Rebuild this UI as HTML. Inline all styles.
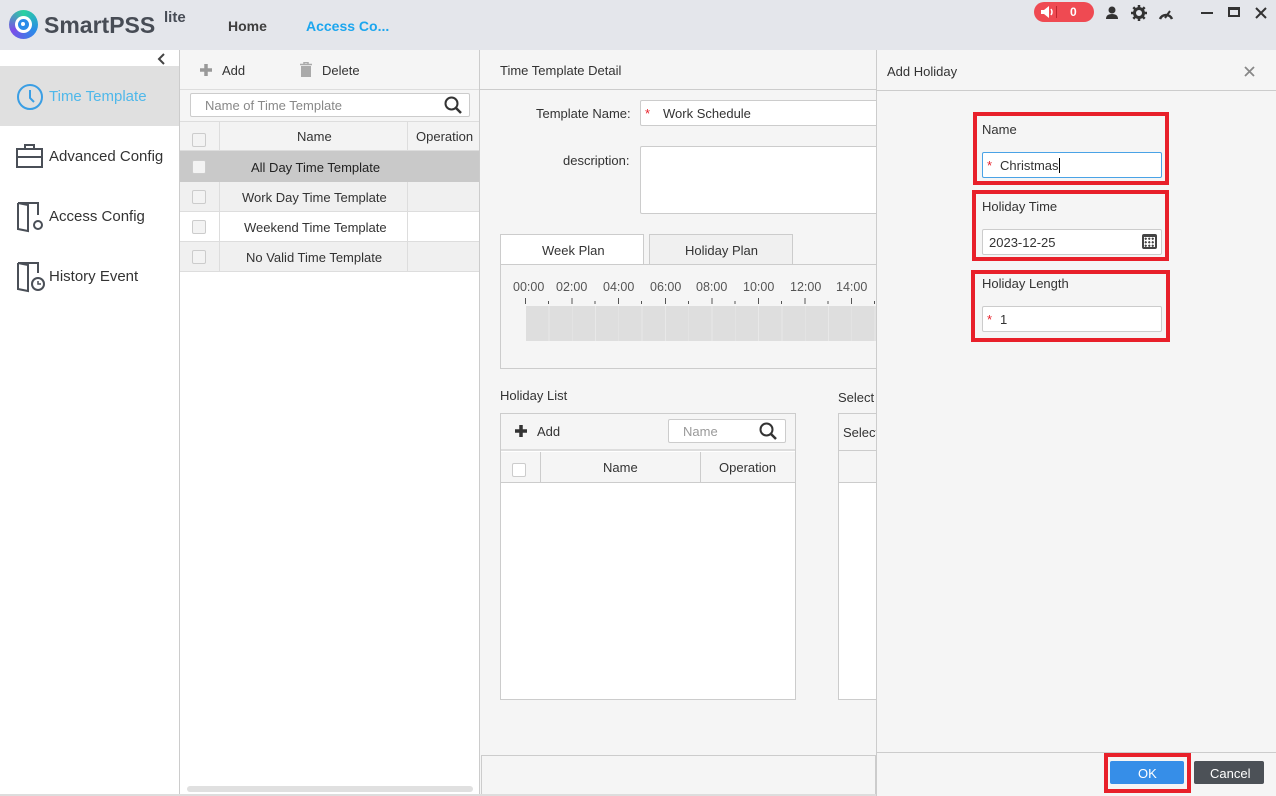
<!DOCTYPE html>
<html><head><meta charset="utf-8"><style>
*{box-sizing:border-box;margin:0;padding:0}
body{width:1276px;height:796px;position:relative;overflow:hidden;font-family:"Liberation Sans",sans-serif;font-size:13px;color:#333;background:#f5f5f5}
.a{position:absolute}
.t{position:absolute;white-space:nowrap}
.inp{position:absolute;background:#fff;border:1px solid #ccc;border-radius:2px}
.red{position:absolute;border:4px solid #e8202a}
.cb{position:absolute;width:14px;height:14px;border:1px solid #ccc;border-radius:2px;background:#f3f3f3}
.star{color:#e8202a}
</style></head><body>
<!-- header -->
<div class="a" style="left:0;top:0;width:1276px;height:50px;background:#e4e6eb"></div>
<div class="a" style="left:9px;top:10px;width:29px;height:29px;border-radius:50%;background:conic-gradient(#2ad2a0,#2a8be8,#7b4ee8,#2ad2a0)"></div>
<div class="a" style="left:15px;top:16px;width:17px;height:17px;border-radius:50%;background:#fff"></div>
<div class="a" style="left:18px;top:19px;width:11px;height:11px;border-radius:50%;background:#2a8be8"></div>
<div class="a" style="left:21px;top:22px;width:4px;height:4px;border-radius:50%;background:#fff"></div>
<div class="t" style="left:44px;top:12px;font-size:23px;font-weight:bold;color:#474c55">SmartPSS</div>
<div class="t" style="left:164px;top:9px;font-size:15px;font-weight:bold;color:#474c55">lite</div>
<div class="t" style="left:228px;top:18px;font-size:14px;font-weight:bold;color:#3e3e3e">Home</div>
<div class="t" style="left:306px;top:18px;font-size:14px;font-weight:bold;color:#1ca6ee">Access Co...</div>
<div class="a" style="left:1034px;top:2px;width:60px;height:20px;border-radius:10px;background:#ef4a52"></div>
<svg class="a" style="left:1040px;top:5px" width="14" height="14"><path d="M1 5h3l5-4v12l-5-4H1z" fill="#fff"/><path d="M11 4q2 3 0 6" stroke="#fff" stroke-width="1.5" fill="none"/></svg>
<div class="a" style="left:1056px;top:6px;width:1px;height:12px;background:#c0262e"></div>
<div class="t" style="left:1070px;top:5px;font-size:12px;font-weight:bold;color:#fff">0</div>
<svg class="a" style="left:1105px;top:6px" width="14" height="14"><circle cx="7" cy="4" r="3.5" fill="#333"/><path d="M1 13q0-5 6-5t6 5z" fill="#333"/></svg>
<svg class="a" style="left:1131px;top:5px" width="16" height="16"><circle cx="8" cy="8" r="4.5" fill="none" stroke="#333" stroke-width="3"/><path d="M8 0v4M8 12v4M0 8h4M12 8h4M2.3 2.3l3 3M10.7 10.7l3 3M2.3 13.7l3-3M10.7 5.3l3-3" stroke="#333" stroke-width="2.5"/></svg>
<svg class="a" style="left:1158px;top:6px" width="16" height="14"><path d="M2 13a6.5 6.5 0 0 1 12 0" fill="none" stroke="#333" stroke-width="2.5"/><path d="M7 12l5-7" stroke="#333" stroke-width="2"/></svg>
<div class="a" style="left:1201px;top:12px;width:12px;height:2px;background:#333"></div>
<div class="a" style="left:1228px;top:7px;width:12px;height:10px;border:2px solid #333;border-top-width:3px"></div>
<svg class="a" style="left:1255px;top:7px" width="12" height="12"><path d="M1 1l10 10M11 1L1 11" stroke="#333" stroke-width="2"/></svg>
<!-- sidebar -->
<div class="a" style="left:0;top:50px;width:180px;height:746px;background:#fff;border-right:1px solid #ccc"></div>
<svg class="a" style="left:157px;top:53px" width="10" height="12"><path d="M7 1L2 6l5 5" fill="none" stroke="#444" stroke-width="2"/></svg>
<div class="a" style="left:0;top:66px;width:179px;height:60px;background:#e0e0e0"></div>
<svg class="a" style="left:16px;top:83px" width="28" height="28"><circle cx="14" cy="14" r="12" fill="none" stroke="#3a9ee4" stroke-width="2"/><path d="M14 7v8l4 4" fill="none" stroke="#3a9ee4" stroke-width="2"/></svg>
<div class="t" style="left:49px;top:88px;font-size:15px;color:#4fb8ea">Time Template</div>
<svg class="a" style="left:16px;top:143px" width="28" height="26"><rect x="1" y="6" width="25" height="18" fill="none" stroke="#4a4f57" stroke-width="2"/><path d="M9 6V2h9v4M1 14h25" fill="none" stroke="#4a4f57" stroke-width="2"/></svg>
<div class="t" style="left:49px;top:148px;font-size:15px;color:#333">Advanced Config</div>
<svg class="a" style="left:16px;top:201px" width="28" height="32"><path d="M2 2h20v12M2 2v26l10 2V4L2 2" fill="none" stroke="#4a4f57" stroke-width="2"/><circle cx="22" cy="24" r="4" fill="none" stroke="#4a4f57" stroke-width="2"/></svg>
<div class="t" style="left:49px;top:208px;font-size:15px;color:#333">Access Config</div>
<svg class="a" style="left:16px;top:261px" width="30" height="32"><path d="M2 2h20v10M2 2v26l10 2V4L2 2" fill="none" stroke="#4a4f57" stroke-width="2"/><circle cx="22" cy="23" r="6" fill="none" stroke="#4a4f57" stroke-width="2"/><path d="M22 20v3h3" fill="none" stroke="#4a4f57" stroke-width="1.5"/></svg>
<div class="t" style="left:49px;top:268px;font-size:15px;color:#333">History Event</div>
<!-- template list panel -->
<div class="a" style="left:180px;top:50px;width:300px;height:746px;background:#fff;border-right:1px solid #ccc"></div>
<div class="a" style="left:180px;top:50px;width:299px;height:40px;background:#f5f5f5;border-bottom:1px solid #ddd"></div>
<svg class="a" style="left:200px;top:64px" width="12" height="12"><path d="M6 0v12M0 6h12" stroke="#999" stroke-width="3.5"/></svg>
<div class="t" style="left:222px;top:63px;color:#333">Add</div>
<svg class="a" style="left:300px;top:62px" width="12" height="15"><path d="M0 2.5h12M4 2V0.5h4V2" stroke="#aaa" stroke-width="1.5" fill="none"/><rect x="1" y="4" width="10" height="11" fill="#aaa"/></svg>
<div class="t" style="left:322px;top:63px;color:#333">Delete</div>
<div class="a" style="left:180px;top:90px;width:299px;height:31px;background:#f5f5f5"></div>
<div class="inp" style="left:190px;top:93px;width:280px;height:24px"></div>
<div class="t" style="left:205px;top:98px;color:#888">Name of Time Template</div>
<svg class="a" style="left:444px;top:96px" width="18" height="18"><circle cx="7.5" cy="7.5" r="6" fill="none" stroke="#333" stroke-width="2"/><path d="M12 12l5 5" stroke="#333" stroke-width="2.5"/></svg>
<div class="a" style="left:180px;top:121px;width:299px;height:30px;background:#f3f3f3;border-bottom:1px solid #ddd;border-top:1px solid #ddd"></div>
<div class="a" style="left:180px;top:151px;width:299px;height:31px;background:#c9c9c9"></div>
<div class="a" style="left:180px;top:182px;width:299px;height:30px;background:#f0f0f0;border-bottom:1px solid #ddd"></div>
<div class="a" style="left:180px;top:212px;width:299px;height:30px;background:#fff;border-bottom:1px solid #ddd"></div>
<div class="a" style="left:180px;top:242px;width:299px;height:30px;background:#f0f0f0;border-bottom:1px solid #ddd"></div>
<div class="a" style="left:219px;top:121px;width:1px;height:30px;background:#ddd"></div>
<div class="a" style="left:219px;top:182px;width:1px;height:90px;background:#ddd"></div>
<div class="a" style="left:407px;top:121px;width:1px;height:30px;background:#ddd"></div>
<div class="a" style="left:407px;top:182px;width:1px;height:90px;background:#ddd"></div>
<div class="cb" style="left:192px;top:133px"></div>
<div class="cb" style="left:192px;top:160px"></div>
<div class="cb" style="left:192px;top:190px"></div>
<div class="cb" style="left:192px;top:220px"></div>
<div class="cb" style="left:192px;top:250px"></div>
<div class="t" style="left:297px;top:129px">Name</div>
<div class="t" style="left:416px;top:129px">Operation</div>
<div class="t" style="left:251px;top:160px;color:#222">All Day Time Template</div>
<div class="t" style="left:242px;top:190px">Work Day Time Template</div>
<div class="t" style="left:244px;top:220px">Weekend Time Template</div>
<div class="t" style="left:246px;top:250px">No Valid Time Template</div>
<div class="a" style="left:187px;top:786px;width:286px;height:6px;background:#e0e0e0;border-radius:3px"></div>
<!-- middle -->
<div class="a" style="left:480px;top:50px;width:396px;height:40px;border-bottom:1px solid #ccc"></div>
<div class="t" style="left:500px;top:63px">Time Template Detail</div>
<div class="t" style="left:536px;top:106px">Template Name:</div>
<div class="inp" style="left:640px;top:100px;width:240px;height:26px"></div>
<div class="t" style="left:645px;top:106px;font-size:13px"><span class="star">*</span></div>
<div class="t" style="left:663px;top:106px">Work Schedule</div>
<div class="t" style="left:563px;top:153px">description:</div>
<div class="inp" style="left:640px;top:146px;width:240px;height:68px"></div>
<div class="a" style="left:500px;top:234px;width:144px;height:31px;background:#fff;border:1px solid #ccc;border-bottom:none"></div>
<div class="t" style="left:542px;top:243px">Week Plan</div>
<div class="a" style="left:649px;top:234px;width:144px;height:30px;background:#f0f0f0;border:1px solid #ccc;border-bottom:none"></div>
<div class="t" style="left:685px;top:243px">Holiday Plan</div>
<div class="a" style="left:500px;top:264px;width:380px;height:105px;border:1px solid #ccc"></div>
<div class="t" style="left:513px;top:280px;color:#555;font-size:12.5px">00:00</div>
<div class="t" style="left:556px;top:280px;color:#555;font-size:12.5px">02:00</div>
<div class="t" style="left:603px;top:280px;color:#555;font-size:12.5px">04:00</div>
<div class="t" style="left:650px;top:280px;color:#555;font-size:12.5px">06:00</div>
<div class="t" style="left:696px;top:280px;color:#555;font-size:12.5px">08:00</div>
<div class="t" style="left:743px;top:280px;color:#555;font-size:12.5px">10:00</div>
<div class="t" style="left:790px;top:280px;color:#555;font-size:12.5px">12:00</div>
<div class="t" style="left:836px;top:280px;color:#555;font-size:12.5px">14:00</div>
<div class="a" style="left:526px;top:306px;width:350px;height:35px;background:repeating-linear-gradient(90deg,#dedede 0 22.5px,#e8e8e8 22.5px 23.3px)"></div>
<div class="a" style="left:525px;top:298px;width:351px;height:6px;background:repeating-linear-gradient(90deg,#555 0 1px,transparent 1px 46.6px)"></div>
<div class="a" style="left:548px;top:301px;width:328px;height:3px;background:repeating-linear-gradient(90deg,#555 0 1px,transparent 1px 46.6px)"></div>
<div class="t" style="left:500px;top:388px">Holiday List</div>
<div class="t" style="left:838px;top:390px">Select</div>
<div class="a" style="left:500px;top:413px;width:296px;height:287px;background:#fff;border:1px solid #ccc"></div>
<div class="a" style="left:501px;top:414px;width:294px;height:37px;background:#f5f5f5;border-bottom:2px solid #ddd"></div>
<svg class="a" style="left:515px;top:425px" width="12" height="12"><path d="M6 0v12M0 6h12" stroke="#333" stroke-width="3.5"/></svg>
<div class="t" style="left:537px;top:424px">Add</div>
<div class="inp" style="left:668px;top:419px;width:118px;height:24px"></div>
<div class="t" style="left:683px;top:424px;color:#999">Name</div>
<svg class="a" style="left:759px;top:422px" width="18" height="18"><circle cx="7.5" cy="7.5" r="6" fill="none" stroke="#333" stroke-width="2"/><path d="M12 12l5 5" stroke="#333" stroke-width="2.5"/></svg>
<div class="a" style="left:501px;top:452px;width:294px;height:31px;background:#f5f5f5;border-bottom:1px solid #ccc"></div>
<div class="a" style="left:540px;top:452px;width:1px;height:31px;background:#ccc"></div>
<div class="a" style="left:700px;top:452px;width:1px;height:31px;background:#ccc"></div>
<div class="cb" style="left:512px;top:463px;background:#fff"></div>
<div class="t" style="left:603px;top:460px">Name</div>
<div class="t" style="left:719px;top:460px">Operation</div>
<div class="a" style="left:838px;top:413px;width:42px;height:287px;background:#fff;border:1px solid #ccc"></div>
<div class="a" style="left:839px;top:414px;width:40px;height:37px;background:#f5f5f5;border-bottom:1px solid #ccc"></div>
<div class="t" style="left:843px;top:425px">Select</div>
<div class="a" style="left:839px;top:451px;width:40px;height:32px;background:#f5f5f5;border-bottom:1px solid #ccc"></div>
<div class="a" style="left:481px;top:755px;width:395px;height:40px;border:1px solid #ccc"></div>
<div class="a" style="left:0;top:794px;width:1276px;height:2px;background:#ddd"></div>
<!-- right dialog -->
<div class="a" style="left:876px;top:50px;width:400px;height:746px;background:#f5f5f5;border-left:1px solid #ccc"></div>
<div class="a" style="left:877px;top:90px;width:399px;height:1px;background:#ccc"></div>
<div class="t" style="left:887px;top:64px">Add Holiday</div>
<svg class="a" style="left:1244px;top:66px" width="11" height="11"><path d="M1 1l9 9M10 1L1 10" stroke="#888" stroke-width="1.8"/></svg>
<div class="red" style="left:973px;top:112px;width:196px;height:73px"></div>
<div class="t" style="left:982px;top:122px">Name</div>
<div class="inp" style="left:982px;top:152px;width:180px;height:26px;border-color:#4aa3e6"></div>
<div class="t" style="left:987px;top:158px"><span class="star">*</span></div>
<div class="t" style="left:1000px;top:158px">Christmas<span style="display:inline-block;width:1px;height:15px;background:#000;vertical-align:-3px"></span></div>
<div class="red" style="left:972px;top:190px;width:197px;height:71px"></div>
<div class="t" style="left:982px;top:199px">Holiday Time</div>
<div class="inp" style="left:982px;top:229px;width:180px;height:26px"></div>
<div class="t" style="left:989px;top:235px">2023-12-25</div>
<div class="a" style="left:1142px;top:234px;width:15px;height:15px;border:2px solid #444;border-top-width:3px;border-radius:2px;background:radial-gradient(circle,#444 1px,transparent 1.2px) 0 0/3.5px 3.5px"></div>
<div class="red" style="left:971px;top:270px;width:199px;height:72px"></div>
<div class="t" style="left:982px;top:276px">Holiday Length</div>
<div class="inp" style="left:982px;top:306px;width:180px;height:26px"></div>
<div class="t" style="left:987px;top:312px"><span class="star">*</span></div>
<div class="t" style="left:1000px;top:312px">1</div>
<div class="a" style="left:877px;top:752px;width:399px;height:1px;background:#ccc"></div>
<div class="red" style="left:1104px;top:753px;width:87px;height:40px"></div>
<div class="a" style="left:1110px;top:761px;width:74px;height:23px;background:#368ee8;border-radius:2px"></div>
<div class="t" style="left:1138px;top:766px;color:#fff">OK</div>
<div class="a" style="left:1194px;top:761px;width:70px;height:23px;background:#4c5157;border-radius:2px"></div>
<div class="t" style="left:1210px;top:766px;color:#fff">Cancel</div>
</body></html>
